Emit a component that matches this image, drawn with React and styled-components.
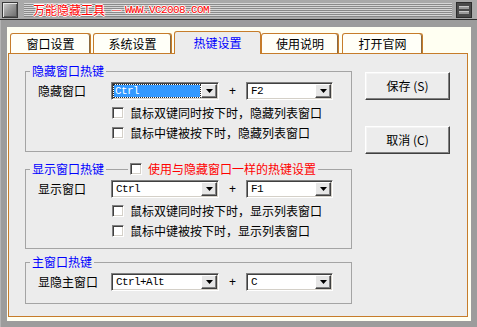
import React from 'react';
import styled, { createGlobalStyle } from 'styled-components';

const GlobalStyle = createGlobalStyle`
  html, body {
    margin: 0;
    padding: 0;
    background: #9a9a9a;
  }
  body {
    font-family: "Noto Sans CJK SC", "Liberation Sans", sans-serif;
    font-size: 12px;
    color: #000;
  }
`;

function Arrow() {
  return (
    <svg width="7" height="4" viewBox="0 0 7 4">
      <polygon points="0,0 7,0 3.5,4" fill="#000" />
    </svg>
  );
}

function RestoreIcon() {
  return (
    <svg width="16" height="16" viewBox="0 0 16 16">
      <rect x="0" y="0" width="16" height="16" fill="#2c2c2c" />
      <rect x="1" y="1" width="14" height="14" fill="#4a4a4a" />
      <rect x="3" y="4" width="10" height="3" fill="#9a9a9a" />
      <rect x="3" y="9" width="10" height="3" fill="#9a9a9a" />
      <rect x="3" y="4" width="10" height="1" fill="#c8c8c8" />
      <rect x="3" y="9" width="10" height="1" fill="#c8c8c8" />
    </svg>
  );
}

function Combo({ width, value, focused }) {
  return (
    <Select $w={width}>
      <Field>{focused ? <Highlight>{value}</Highlight> : <Value>{value}</Value>}</Field>
      <DropButton>
        <Arrow />
      </DropButton>
    </Select>
  );
}

function HotkeyRow({ label, first, second, focused }) {
  return (
    <Row>
      <RowLabel>{label}</RowLabel>
      <Combo width={108} value={first} focused={focused} />
      <Plus>+</Plus>
      <Combo width={87} value={second} />
    </Row>
  );
}

function Check({ children }) {
  return (
    <CheckRow>
      <CheckBox />
      <span>{children}</span>
    </CheckRow>
  );
}

const tabs = [
  { name: '窗口设置', w: 81, gap: 0 },
  { name: '系统设置', w: 79, gap: 2 },
  { name: '热键设置', w: 87, gap: 2, active: true },
  { name: '使用说明', w: 78, gap: 0 },
  { name: '打开官网', w: 81, gap: 3 },
];

export default function App() {
  return (
    <>
      <GlobalStyle />
      <Window>
        <TitleBar>
          <SysIcon />
          <Stripes>
            <Title>
              万能隐藏工具<Dash>—</Dash>
              <Url>WWW.VC2008.COM</Url>
            </Title>
          </Stripes>
          <RestoreIcon />
        </TitleBar>
        <Frame>
          <Client>
            <TabRow>
              {tabs.map((t) => (
                <Tab key={t.name} $w={t.w} $gap={t.gap} $active={t.active}>
                  {t.name}
                </Tab>
              ))}
            </TabRow>
            <Panel>
              <Groups>
                <Group $pb={8}>
                  <Legend>隐藏窗口热键</Legend>
                  <HotkeyRow label="隐藏窗口" first="Ctrl" second="F2" focused />
                  <Checks>
                    <Check>鼠标双键同时按下时，隐藏列表窗口</Check>
                    <Check>鼠标中键被按下时，隐藏列表窗口</Check>
                  </Checks>
                </Group>
                <Group $mt={10} $pb={7}>
                  <Legend>
                    显示窗口热键
                    <LegendLine />
                    <CheckBox />
                    <RedText>使用与隐藏窗口一样的热键设置</RedText>
                  </Legend>
                  <HotkeyRow label="显示窗口" first="Ctrl" second="F1" />
                  <Checks>
                    <Check>鼠标双键同时按下时，显示列表窗口</Check>
                    <Check>鼠标中键被按下时，显示列表窗口</Check>
                  </Checks>
                </Group>
                <Group $mt={6} $pb={12}>
                  <Legend>主窗口热键</Legend>
                  <HotkeyRow label="显隐主窗口" first="Ctrl+Alt" second="C" />
                </Group>
              </Groups>
              <Buttons>
                <Button>保存 (S)</Button>
                <Button>取消 (C)</Button>
              </Buttons>
            </Panel>
          </Client>
        </Frame>
      </Window>
    </>
  );
}

const Window = styled.div`
  width: 477px;
  height: 327px;
  display: flex;
  flex-direction: column;
  background: #8e8e8e;
  overflow: hidden;
`;

const TitleBar = styled.div`
  height: 19px;
  display: flex;
  align-items: center;
  padding: 0 5px 0 2px;
  background: #a9a9a9;
  border-bottom: 1px solid #2e2e2e;
`;

const SysIcon = styled.div`
  width: 16px;
  height: 16px;
  box-sizing: border-box;
  border: 1px solid #3a3a3a;
  background: linear-gradient(135deg, #d0d0d0 0%, #9a9a9a 45%, #6a6a6a 100%);
  box-shadow: inset 1px 1px #e8e8e8, inset -1px -1px #5a5a5a;
`;

const Stripes = styled.div`
  flex: 1;
  height: 14px;
  margin: 0 4px 0 6px;
  display: flex;
  align-items: center;
  background: repeating-linear-gradient(
    to bottom,
    #d6d6d6 0px,
    #d6d6d6 1px,
    #8a8a8a 1px,
    #8a8a8a 2px
  );
`;

const Title = styled.div`
  padding-left: 9px;
  display: flex;
  align-items: center;
  font-size: 12px;
  line-height: 14px;
  color: #ff0000;
  text-shadow: 1px 0 #fff, -1px 0 #fff, 0 1px #fff, 0 -1px #fff;
`;

const Dash = styled.span`
  font-family: "Liberation Sans", sans-serif;
  font-size: 9px;
  margin: 0 4px 0 7px;
`;

const Url = styled.span`
  font-family: "Liberation Mono", monospace;
  font-size: 11px;
  letter-spacing: -0.6px;
`;

const Frame = styled.div`
  flex: 1;
  display: flex;
  padding: 7px 6px 6px 6px;
  background: #9c9c9c;
  border-left: 1px solid #b4b4b4;
`;

const Client = styled.div`
  flex: 1;
  display: flex;
  flex-direction: column;
  padding: 4px 3px 4px 1px;
  background: #fffff2;
`;

const TabRow = styled.div`
  height: 22px;
  display: flex;
  align-items: flex-end;
  padding-left: 2px;
`;

const Tab = styled.div`
  position: relative;
  z-index: ${(p) => (p.$active ? 1 : 0)};
  width: ${(p) => p.$w}px;
  height: ${(p) => (p.$active ? 23 : 20)}px;
  margin-left: ${(p) => p.$gap}px;
  margin-bottom: ${(p) => (p.$active ? -1 : 0)}px;
  box-sizing: border-box;
  display: flex;
  align-items: center;
  justify-content: center;
  border: 1px solid #c67c2a;
  border-bottom: none;
  border-radius: 3px 3px 0 0;
  background: ${(p) => (p.$active ? '#ececec' : '#fffff8')};
  color: ${(p) => (p.$active ? '#0000ff' : '#000')};
  box-shadow: ${(p) => (p.$active ? 'none' : 'inset -1px 0 #8a6a40')};
  font-size: 12px;
  line-height: 14px;
`;

const Panel = styled.div`
  flex: 1;
  display: flex;
  gap: 13px;
  padding: 10px 16px 0 16px;
  border: 1px solid #c67c2a;
  background: #ececec;
`;

const Groups = styled.div`
  width: 327px;
  display: flex;
  flex-direction: column;
`;

const Group = styled.fieldset`
  margin: ${(p) => p.$mt || 0}px 0 0 0;
  padding: 0 0 ${(p) => p.$pb}px 0;
  min-width: 0;
  border: 1px solid #a4a4a4;
`;

const Legend = styled.legend`
  margin-left: 4px;
  padding: 0 2px;
  display: flex;
  align-items: center;
  height: 14px;
  font-size: 12px;
  line-height: 14px;
  color: #0000ff;
`;

const LegendLine = styled.span`
  width: 22px;
  height: 1px;
  margin: 1px 2px 0 2px;
  background: #a4a4a4;
`;

const RedText = styled.span`
  margin-left: 6px;
  color: #ff0000;
`;

const Row = styled.div`
  display: flex;
  align-items: center;
  height: 18px;
  margin-top: 4px;
  padding-left: 12px;
`;

const RowLabel = styled.span`
  width: 73px;
  font-size: 12px;
  line-height: 14px;
`;

const Plus = styled.span`
  width: 27px;
  text-align: center;
  font-family: "Liberation Sans", sans-serif;
  font-size: 12px;
`;

const Select = styled.div`
  width: ${(p) => p.$w}px;
  height: 18px;
  box-sizing: border-box;
  display: flex;
  padding: 1px;
  border: 1px solid;
  border-color: #808080 #fff #fff #808080;
  box-shadow: inset 1px 1px #404040, inset -1px -1px #d4d0c8;
  background: #fff;
`;

const Field = styled.div`
  flex: 1;
  display: flex;
  padding: 1px;
  font-family: "Liberation Mono", monospace;
  font-size: 11px;
  letter-spacing: -0.6px;
  line-height: 12px;
`;

const Value = styled.span`
  padding-left: 2px;
`;

const Highlight = styled.span`
  flex: 1;
  padding-left: 1px;
  box-sizing: border-box;
  background: #3399ff;
  color: #fff;
  outline: 1px dotted #2a2a2a;
`;

const DropButton = styled.div`
  width: 16px;
  box-sizing: border-box;
  display: flex;
  align-items: center;
  justify-content: center;
  border: 1px solid;
  border-color: #fff #404040 #404040 #fff;
  box-shadow: inset -1px -1px #808080;
  background: #e6e6e6;
`;

const Checks = styled.div`
  margin-top: 3px;
  display: flex;
  flex-direction: column;
`;

const CheckRow = styled.div`
  height: 20px;
  display: flex;
  align-items: center;
  gap: 6px;
  padding-left: 86px;
  font-size: 12px;
  line-height: 14px;
`;

const CheckBox = styled.span`
  width: 12px;
  height: 12px;
  flex: none;
  box-sizing: border-box;
  border: 1px solid;
  border-color: #808080 #fff #fff #808080;
  box-shadow: inset 1px 1px #404040, inset -1px -1px #d4d0c8;
  background: #fff;
`;

const Buttons = styled.div`
  display: flex;
  flex-direction: column;
  gap: 26px;
  padding-top: 8px;
`;

const Button = styled.div`
  width: 85px;
  height: 28px;
  box-sizing: border-box;
  display: flex;
  align-items: center;
  justify-content: center;
  border: 1px solid;
  border-color: #fff #404040 #404040 #fff;
  box-shadow: inset -1px -1px #808080, inset 1px 1px #f4f4f4;
  background: #ececec;
  font-size: 12px;
  line-height: 14px;
`;
